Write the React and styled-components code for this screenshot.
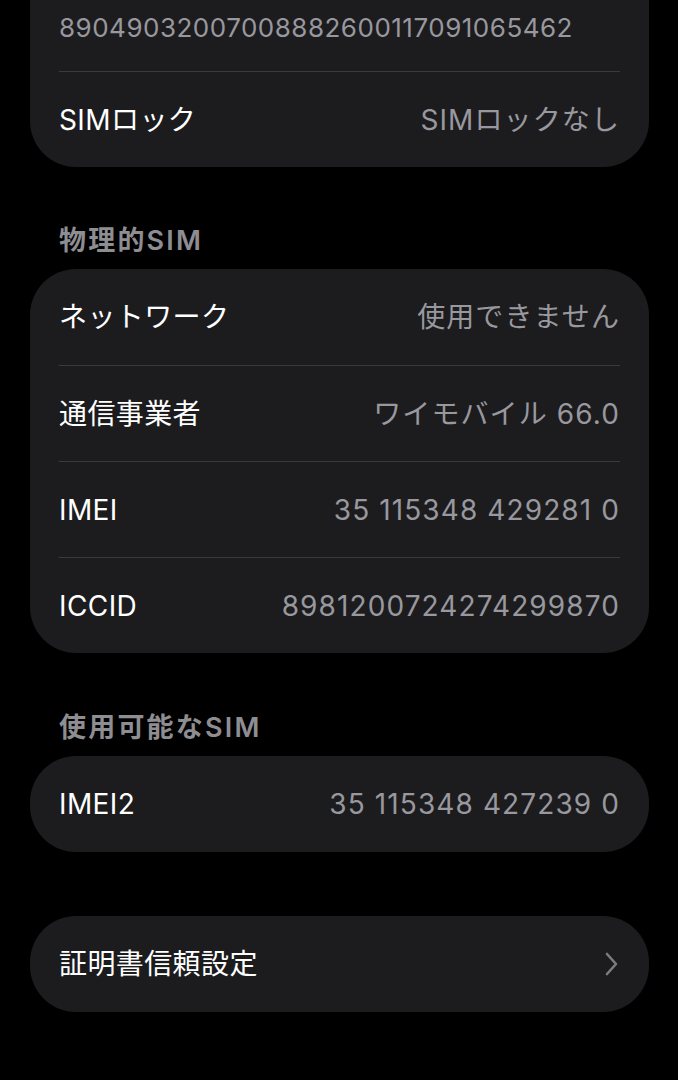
import React from "react";
import styled, { createGlobalStyle } from "styled-components";

const Global = createGlobalStyle`
  html, body { margin: 0; padding: 0; background: #000; }
  body {
    font-family: "Inter", "Noto Sans CJK JP", sans-serif;
    -webkit-font-smoothing: antialiased;
    overflow: hidden;
  }
`;

const Page = styled.div`
  display: flex;
  flex-direction: column;
  padding: 0 29px 0 30px;
  height: 1080px;
  overflow: hidden;
  background: #000;
`;

const Card = styled.div`
  background: #1c1c1e;
  border-radius: 46px;
  padding: 0 29px;
  margin-top: ${(p) => p.$mt || 0}px;
  display: flex;
  flex-direction: column;
`;

const Row = styled.div`
  box-sizing: border-box;
  height: 96px;
  display: flex;
  align-items: center;
  justify-content: space-between;
  border-top: ${(p) => (p.$first ? "none" : "1px solid #3a3a3c")};
`;

const ValueRow = styled.div`
  display: flex;
  padding: 61px 0 26px;
`;

const Label = styled.span`
  color: #fff;
  font-size: 28px;
  line-height: 36px;
  letter-spacing: 0.4px;
`;

const Value = styled.span`
  color: #98989e;
  font-size: ${(p) => p.$size || 28}px;
  line-height: ${(p) => (p.$size ? 34 : 36)}px;
  letter-spacing: ${(p) => (p.$size ? 0.5 : 1.1)}px;
`;

const Header = styled.div`
  color: #8d8d92;
  font-size: 27px;
  line-height: 34px;
  font-weight: 600;
  letter-spacing: 2.2px;
  padding: ${(p) => p.$pt || 57}px 29px 11px;
`;

const Chevron = () => (
  <svg width="16" height="26" viewBox="0 0 16 26" fill="none">
    <path d="M3 3 L12 13 L3 23" stroke="#7c7c80" strokeWidth="2.6" strokeLinecap="round" strokeLinejoin="round" />
  </svg>
);

export default function App() {
  return (
    <>
      <Global />
      <Page>
        <Card $mt={-50}>
          <ValueRow>
            <Value $size={26}>89049032007008882600117091065462</Value>
          </ValueRow>
          <Row>
            <Label>SIMロック</Label>
            <Value>SIMロックなし</Value>
          </Row>
        </Card>

        <Header>物理的SIM</Header>
        <Card>
          <Row $first>
            <Label>ネットワーク</Label>
            <Value>使用できません</Value>
          </Row>
          <Row>
            <Label>通信事業者</Label>
            <Value>ワイモバイル 66.0</Value>
          </Row>
          <Row>
            <Label>IMEI</Label>
            <Value>35 115348 429281 0</Value>
          </Row>
          <Row>
            <Label>ICCID</Label>
            <Value>8981200724274299870</Value>
          </Row>
        </Card>

        <Header $pt={58}>使用可能なSIM</Header>
        <Card>
          <Row $first>
            <Label>IMEI2</Label>
            <Value>35 115348 427239 0</Value>
          </Row>
        </Card>

        <Card $mt={64}>
          <Row $first>
            <Label>証明書信頼設定</Label>
            <Chevron />
          </Row>
        </Card>
      </Page>
    </>
  );
}
